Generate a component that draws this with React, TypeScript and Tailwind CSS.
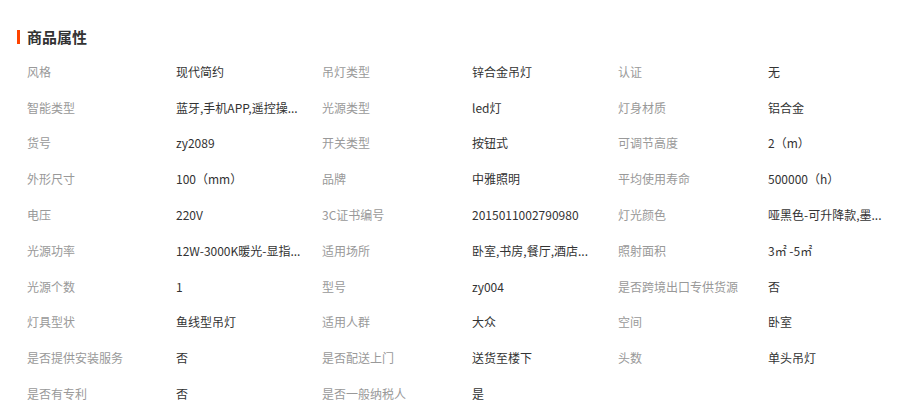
import React from 'react';

const attrs: [string, string][] = [
  ['风格', '现代简约'],
  ['吊灯类型', '锌合金吊灯'],
  ['认证', '无'],
  ['智能类型', '蓝牙,手机APP,遥控操...'],
  ['光源类型', 'led灯'],
  ['灯身材质', '铝合金'],
  ['货号', 'zy2089'],
  ['开关类型', '按钮式'],
  ['可调节高度', '2（m）'],
  ['外形尺寸', '100（mm）'],
  ['品牌', '中雅照明'],
  ['平均使用寿命', '500000（h）'],
  ['电压', '220V'],
  ['3C证书编号', '2015011002790980'],
  ['灯光颜色', '哑黑色-可升降款,墨...'],
  ['光源功率', '12W-3000K暖光-显指...'],
  ['适用场所', '卧室,书房,餐厅,酒店...'],
  ['照射面积', '3㎡ -5㎡'],
  ['光源个数', '1'],
  ['型号', 'zy004'],
  ['是否跨境出口专供货源', '否'],
  ['灯具型状', '鱼线型吊灯'],
  ['适用人群', '大众'],
  ['空间', '卧室'],
  ['是否提供安装服务', '否'],
  ['是否配送上门', '送货至楼下'],
  ['头数', '单头吊灯'],
  ['是否有专利', '否'],
  ['是否一般纳税人', '是'],
];

const App: React.FC = () => {
  return (
    <div
      className="w-[906px] h-[416px] bg-white overflow-hidden"
      style={{ fontFamily: '"Microsoft YaHei", "Noto Sans CJK SC", sans-serif' }}
    >
      {/* 标题 */}
      <div className="flex items-center h-[16px] mt-[29px] ml-[17px]">
        <div className="w-[3px] h-[14px] bg-[#ff4400]" />
        <h3 className="ml-[7px] text-[15px] leading-[16px] font-bold text-[#333]">商品属性</h3>
      </div>

      {/* 属性表格 */}
      <div className="mt-[9px] pl-[27px] grid grid-cols-[149px_146px_150px_146px_150px_1fr]">
        {attrs.map(([label, value]) => (
          <React.Fragment key={label}>
            <div className="h-[35.8px] flex items-center text-[12px] text-[#999] whitespace-nowrap">
              {label}
            </div>
            <div className="h-[35.8px] flex items-center text-[12px] text-[#333] whitespace-nowrap">
              {value}
            </div>
          </React.Fragment>
        ))}
      </div>
    </div>
  );
};

export default App;
